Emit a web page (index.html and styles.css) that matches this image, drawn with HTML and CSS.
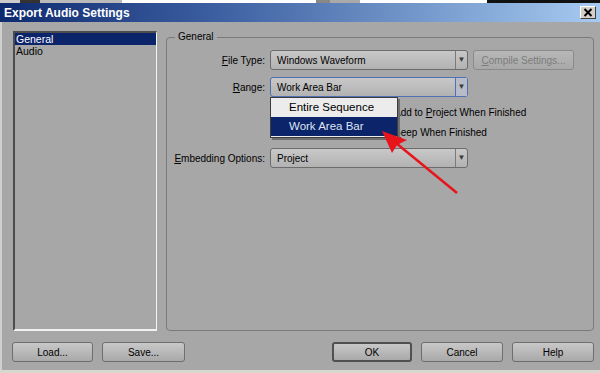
FILE: index.html
```html
<!DOCTYPE html>
<html>
<head>
<title>Export Audio Settings</title>
<link rel="stylesheet" href="styles.css">
</head>
<body>
  <div class="strip"></div>

  <div class="titlebar">
    <span class="title">Export Audio Settings</span>
    <span class="close">
      <svg width="10" height="9" viewBox="0 0 10 9"><path d="M1.5 1 L8.5 8 M8.5 1 L1.5 8" stroke="#000" stroke-width="2"/></svg>
    </span>
  </div>

  <div class="dialog">
    <div class="main">
      <ul class="list">
        <li class="sel">General</li>
        <li>Audio</li>
      </ul>

      <fieldset class="group">
        <legend>General</legend>

        <div class="row">
          <span class="label"><u>F</u>ile Type:</span>
          <div class="combo"><span class="val">Windows Waveform</span><span class="drop">&#9660;</span></div>
          <button class="btn compile" disabled><u>C</u>ompile Settings...</button>
        </div>

        <div class="row tight">
          <span class="label"><u>R</u>ange:</span>
          <div class="combo focus">
            <span class="val">Work Area Bar</span><span class="drop">&#9660;</span>
            <!-- open list over the checkboxes -->
            <div class="popup">
              <div class="opt">Entire Sequence</div>
              <div class="opt hot">Work Area Bar</div>
            </div>
          </div>
        </div>

        <div class="check"><span class="box"></span><span>Add to <u>P</u>roject When Finished</span></div>
        <div class="check last"><span class="box"></span><span><u>B</u>eep When Finished</span></div>

        <div class="row">
          <span class="label"><u>E</u>mbedding Options:</span>
          <div class="combo"><span class="val">Project</span><span class="drop">&#9660;</span></div>
        </div>
      </fieldset>
    </div>

    <div class="footer">
      <div class="btns">
        <button class="btn w81">Load...</button>
        <button class="btn w83">Save...</button>
      </div>
      <div class="btns">
        <button class="btn w80 default">OK</button>
        <button class="btn w82">Cancel</button>
        <button class="btn w82">Help</button>
      </div>
    </div>
  </div>
  <div class="bottom"></div>

  <svg class="arrow" width="600" height="373" viewBox="0 0 600 373">
    <line x1="457" y1="193" x2="396" y2="143" stroke="#e8141c" stroke-width="2.5"/>
    <polygon points="382,131 392,153 397,145 407,140" fill="#e8141c"/>
  </svg>
</body>
</html>
```

FILE: styles.css
```css
/* dialog base */
body {
  margin: 0;
  width: 600px;
  height: 373px;
  position: relative;
  overflow: hidden;
  background: #a7a7a7;
  font-family: 'Liberation Sans', Arial, sans-serif;
  font-size: 10px;
  color: #000;
  display: flex;
  flex-direction: column;
}

/* bits of other windows above the dialog */
.strip {
  height: 3px;
  background: linear-gradient(to right, #ccc 0 20px, #333 20px 40px, #bbb 40px 122px, #fff 122px 316px,
    #888 316px 330px, #aaa 330px 360px, #fff 360px 487px, #111 487px);
}

/* Title Bar */
.titlebar {
  height: 19px;
  background: linear-gradient(to right, #0e2a6e, #3b5ea0 35%, #a6caf0);
  display: flex;
  align-items: center;
  justify-content: space-between;
  padding: 0 4px 0 4px;
}

.titlebar .title {
  color: #fff;
  font-weight: bold;
  font-size: 12px;
}

.titlebar .close {
  width: 14px;
  height: 11px;
  background: #d4d0c8;
  border-style: solid;
  border-width: 1px;
  border-color: #fff #404040 #404040 #fff;
  display: flex;
  align-items: center;
  justify-content: center;
}

/* Dialog */
.dialog {
  flex: 1;
  border-left: 2px solid #cfcfcf;
  padding: 9px 6px 8px 11px;
  display: flex;
  flex-direction: column;
}

.main {
  display: flex;
  gap: 9px;
  height: 300px;
}

.list {
  list-style: none;
  margin: 0;
  padding: 0;
  width: 141px;
  border-style: solid;
  border-width: 2px 1px 2px 2px;
  border-color: #4c4c4c #f2f2f2 #f2f2f2 #4c4c4c;
  font-size: 10.5px;
}

.list li {
  height: 12px;
  line-height: 12px;
  padding-left: 1px;
}

.list li.sel {
  background: #0c246a;
  color: #fff;
}

.group {
  flex: 1;
  min-width: 0;
  margin: 0;
  padding: 7px 0 0 0;
  border: 1px solid #7a7a7a;
  border-radius: 4px;
}

.group legend {
  margin-left: 8px;
  padding: 0 3px;
  font-size: 10px;
  line-height: 12px;
}

/* Form rows */
.row {
  display: flex;
  align-items: center;
  height: 20px;
  margin-bottom: 7px;
}

.row.tight {
  margin-bottom: 5px;
}

.label {
  width: 98px;
  text-align: right;
  margin-right: 5px;
}

.combo {
  position: relative;
  width: 198px;
  height: 20px;
  box-sizing: border-box;
  border: 1px solid #6c6c6c;
  border-radius: 3px;
  background: linear-gradient(to bottom, #c8c8c8, #b2b2b2);
  display: flex;
  align-items: center;
}

.combo .val {
  flex: 1;
  padding-left: 6px;
}

.combo .drop {
  width: 11px;
  height: 18px;
  line-height: 18px;
  border-left: 1px solid #7a7a7a;
  text-align: center;
  font-size: 8px;
  color: #3c3c3c;
}

.combo.focus {
  border-color: #5070b4;
}

.combo.focus .drop {
  border-left-color: #5070b4;
  background: #b8bcc8;
}

.popup {
  position: absolute;
  top: 19px;
  left: -1px;
  width: 128px;
  height: 41px;
  box-sizing: border-box;
  border: 1px solid #3c3c3c;
  background: #ececec;
  box-shadow: 2px 2px 0 #6e6e6e;
  font-size: 11.5px;
  z-index: 2;
}

.popup .opt {
  height: 19px;
  line-height: 19px;
  padding-left: 18px;
}

.popup .opt.hot {
  background: #0c246a;
  color: #dfe4f2;
}

/* Checkboxes hidden behind popup */
.check {
  height: 20px;
  display: flex;
  align-items: center;
  padding-left: 210px;
  font-size: 10px;
}

.check.last {
  margin-bottom: 6px;
}

.check .box {
  width: 11px;
  height: 11px;
  border: 1px solid #555;
  background: #c8c8c8;
  margin-right: 4px;
}

/* Buttons */
.btn {
  height: 20px;
  box-sizing: border-box;
  border: 1px solid #6e6e6e;
  border-radius: 3px;
  background: linear-gradient(to bottom, #c8c8c8, #a9a9a9);
  font-family: 'Liberation Sans', Arial, sans-serif;
  font-size: 10px;
  color: #000;
  padding: 0;
  margin: 0;
}

.btn.compile {
  width: 101px;
  margin-left: 5px;
  color: #7c7c7c;
  border-color: #8a8a8a;
  background: linear-gradient(to bottom, #b8b8b8, #a8a8a8);
}

.btn.default {
  border: 2px solid #505050;
}

.w80 { width: 80px; }
.w81 { width: 81px; }
.w82 { width: 82px; }
.w83 { width: 83px; }

.footer {
  margin-top: 11px;
  display: flex;
  justify-content: space-between;
}

.footer .btns {
  display: flex;
  gap: 9px;
}

.footer .btns:first-child {
  margin-left: -1px;
}

.bottom {
  height: 3px;
  background: #d8d8d0;
}

/* red callout arrow drawn over the dialog */
.arrow {
  position: absolute;
  top: 0;
  left: 0;
  pointer-events: none;
  z-index: 5;
}
```
